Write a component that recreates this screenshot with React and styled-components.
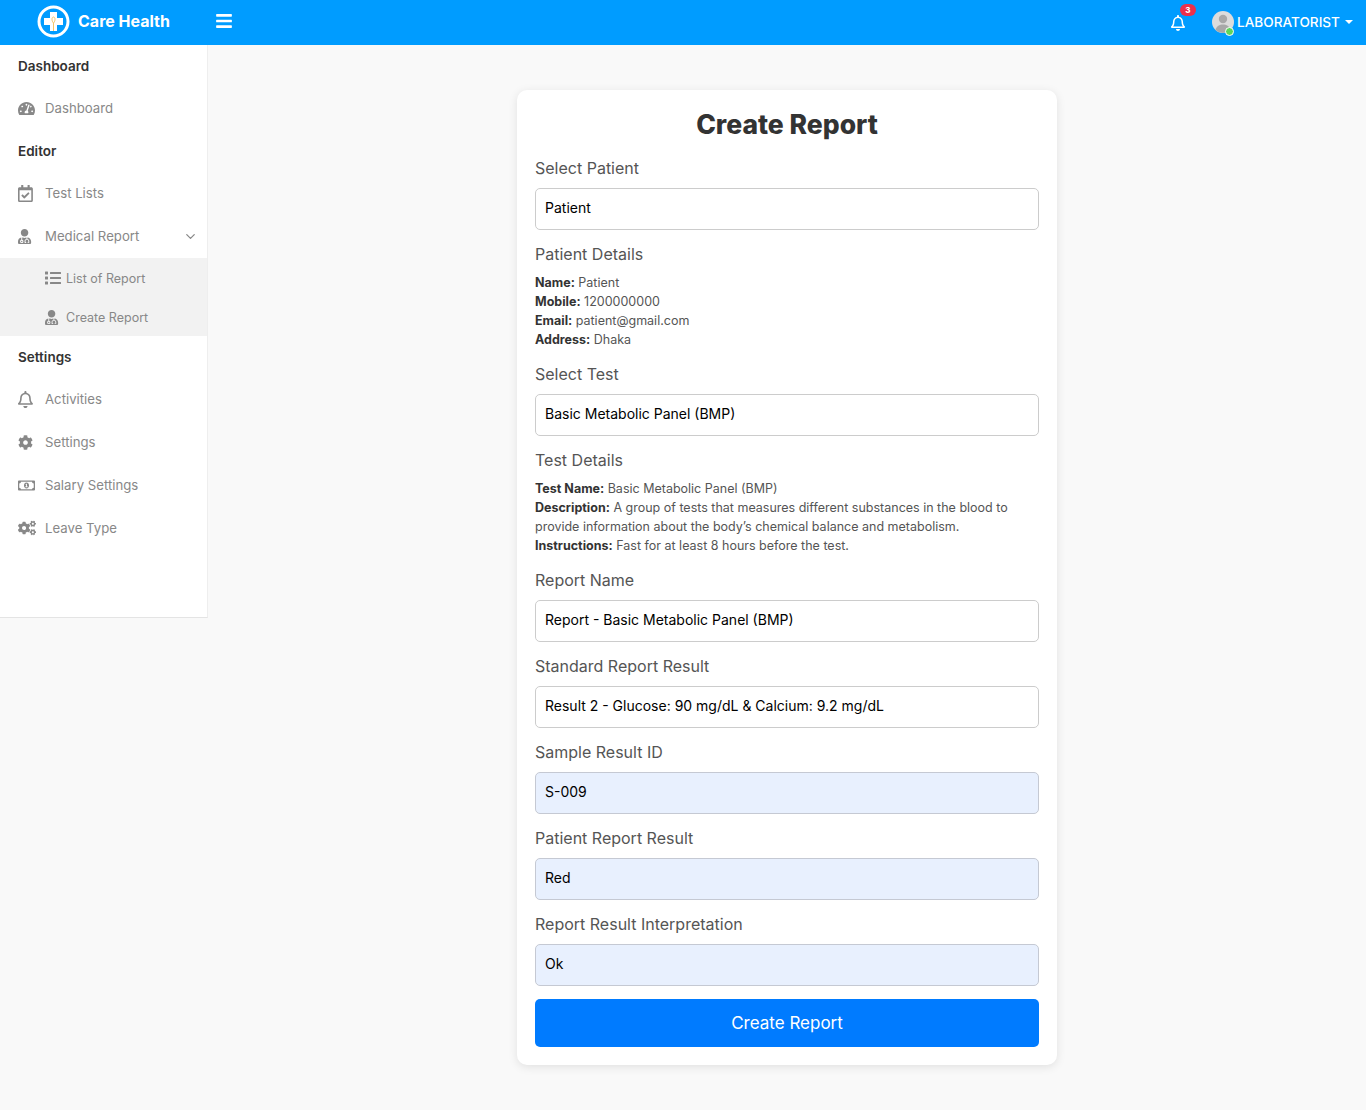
import styled, { createGlobalStyle } from 'styled-components';
import {
  FaBars,
  FaCog,
  FaCogs,
  FaList,
  FaRegBell,
  FaRegCalendarCheck,
  FaRegMoneyBillAlt,
  FaTachometerAlt,
  FaUserMd,
} from 'react-icons/fa';
import { FiChevronDown } from 'react-icons/fi';

const FONT = '"Inter", "Roboto", "Liberation Sans", sans-serif';

const GlobalStyle = createGlobalStyle`
  * {
    box-sizing: border-box;
  }
  body {
    margin: 0;
    background: #f9f9f9;
    font-family: ${FONT};
  }
`;

const Logo = () => (
  <svg width="33" height="33" viewBox="0 0 33 33">
    <circle cx="16.5" cy="16.5" r="14.5" fill="none" stroke="#fff" strokeWidth="3" />
    <path d="M13 7h7v6h6v7h-6v6h-7v-6H7v-7h6z" fill="#fff" />
    <path d="M16.5 12c-2 0-2 4 0 6v8M16.5 12c2 0 2 4 0 6" fill="none" stroke="#f5c469" strokeWidth="1" />
  </svg>
);

const Avatar = () => (
  <svg width="22" height="22" viewBox="0 0 22 22">
    <circle cx="11" cy="11" r="11" fill="#dcdcdc" />
    <circle cx="11" cy="8" r="4.2" fill="#a8a8a8" />
    <path d="M3.5 19c1-4 4-5.5 7.500-5.500s6.500 1.500 7.500 5.500a11 11 0 0 1-15 0z" fill="#a8a8a8" />
  </svg>
);

const sections = [
  { title: 'Dashboard', items: [{ label: 'Dashboard', Icon: FaTachometerAlt, size: 17 }] },
  {
    title: 'Editor',
    items: [
      { label: 'Test Lists', Icon: FaRegCalendarCheck, size: 17 },
      {
        label: 'Medical Report',
        Icon: FaUserMd,
        size: 15,
        children: [
          { label: 'List of Report', Icon: FaList, size: 16 },
          { label: 'Create Report', Icon: FaUserMd, size: 15 },
        ],
      },
    ],
  },
  {
    title: 'Settings',
    items: [
      { label: 'Activities', Icon: FaRegBell, size: 17 },
      { label: 'Settings', Icon: FaCog, size: 15 },
      { label: 'Salary Settings', Icon: FaRegMoneyBillAlt, size: 17 },
      { label: 'Leave Type', Icon: FaCogs, size: 18 },
    ],
  },
];

const patient = [
  ['Name:', 'Patient'],
  ['Mobile:', '1200000000'],
  ['Email:', 'patient@gmail.com'],
  ['Address:', 'Dhaka'],
];

const test = [
  ['Test Name:', 'Basic Metabolic Panel (BMP)'],
  [
    'Description:',
    'A group of tests that measures different substances in the blood to provide information about the body’s chemical balance and metabolism.',
  ],
  ['Instructions:', 'Fast for at least 8 hours before the test.'],
];

const Field = ({ label, value, filled }) => (
  <FieldBlock>
    <Label>{label}</Label>
    <Input type="text" readOnly value={value} $filled={filled} />
  </FieldBlock>
);

const Details = ({ title, rows }) => (
  <DetailBlock>
    <DetailLabel>{title}</DetailLabel>
    <DetailText>
      {rows.map(([name, text]) => (
        <div key={name}>
          <strong>{name}</strong> {text}
        </div>
      ))}
    </DetailText>
  </DetailBlock>
);

export default function App() {
  return (
    <>
      <GlobalStyle />
      <Header>
        <Brand>
          <Logo />
          <BrandName>Care Health</BrandName>
        </Brand>
        <MenuBtn>
          <FaBars size={18} />
        </MenuBtn>
        <HeaderRight>
          <Bell>
            <FaRegBell size={16} />
            <Badge>3</Badge>
          </Bell>
          <User>
            <AvatarWrap>
              <Avatar />
              <Online />
            </AvatarWrap>
            <UserName>LABORATORIST</UserName>
            <Caret />
          </User>
        </HeaderRight>
      </Header>
      <Body>
        <Sidebar>
          {sections.map(section => (
            <div key={section.title}>
              <SectionTitle>{section.title}</SectionTitle>
              {section.items.map(({ label, Icon, size, children }) => (
                <div key={label}>
                  <NavItem>
                    <IconSlot>
                      <Icon size={size} preserveAspectRatio="xMinYMid" />
                    </IconSlot>
                    {label}
                    {children && (
                      <Chevron>
                        <FiChevronDown size={15} />
                      </Chevron>
                    )}
                  </NavItem>
                  {children && (
                    <SubMenu>
                      {children.map(child => (
                        <SubItem key={child.label}>
                          <SubIcon>
                            <child.Icon size={child.size} preserveAspectRatio="xMinYMid" />
                          </SubIcon>
                          {child.label}
                        </SubItem>
                      ))}
                    </SubMenu>
                  )}
                </div>
              ))}
            </div>
          ))}
        </Sidebar>
        <Main>
          <Card>
            <Title>Create Report</Title>
            <Field label="Select Patient" value="Patient" />
            <Details title="Patient Details" rows={patient} />
            <Field label="Select Test" value="Basic Metabolic Panel (BMP)" />
            <Details title="Test Details" rows={test} />
            <Field label="Report Name" value="Report - Basic Metabolic Panel (BMP)" />
            <Field label="Standard Report Result" value="Result 2 - Glucose: 90 mg/dL & Calcium: 9.2 mg/dL" />
            <Field label="Sample Result ID" value="S-009" filled />
            <Field label="Patient Report Result" value="Red" filled />
            <Field label="Report Result Interpretation" value="Ok" filled />
            <SubmitBtn type="button">Create Report</SubmitBtn>
          </Card>
        </Main>
      </Body>
    </>
  );
}

const Header = styled.header`
  display: flex;
  align-items: center;
  height: 45px;
  padding-bottom: 3px;
  background: #009cff;
  color: #fff;
`;
const Brand = styled.div`
  display: flex;
  align-items: center;
  gap: 8px;
  width: 215px;
  padding-left: 37px;
`;
const BrandName = styled.span`
  font-size: 16px;
  font-weight: 700;
`;
const MenuBtn = styled.div`
  display: flex;
`;
const HeaderRight = styled.div`
  display: flex;
  align-items: center;
  margin-left: auto;
  padding: 1px 13px 0 0;
`;
const Bell = styled.div`
  position: relative;
  display: flex;
  margin: 2px 26px 0 0;
`;
const Badge = styled.span`
  position: absolute;
  top: -11px;
  left: 10px;
  width: 16px;
  height: 12px;
  border-radius: 6px;
  background: #ec2f4b;
  font-size: 8px;
  font-weight: 800;
  line-height: 12px;
  text-align: center;
`;
const User = styled.div`
  display: flex;
  align-items: center;
`;
const AvatarWrap = styled.div`
  position: relative;
  display: flex;
  margin-right: 3px;
`;
const Online = styled.span`
  position: absolute;
  right: 0;
  bottom: -3px;
  width: 9px;
  height: 9px;
  border: 1px solid #fff;
  border-radius: 50%;
  background: #5cd65c;
`;
const UserName = styled.span`
  font-size: 13.6px;
  font-weight: 500;
`;
const Caret = styled.span`
  width: 0;
  height: 0;
  margin-left: 5px;
  border-top: 4px solid #fff;
  border-left: 4px solid transparent;
  border-right: 4px solid transparent;
`;
const Body = styled.div`
  display: flex;
  align-items: flex-start;
`;
const Sidebar = styled.aside`
  flex: none;
  width: 208px;
  height: 573px;
  background: #fff;
  border-right: 1px solid #eee;
  border-bottom: 1px solid #e4e4e4;
`;
const SectionTitle = styled.div`
  display: flex;
  align-items: center;
  height: 42px;
  padding-left: 18px;
  color: #333;
  font-size: 13.5px;
  font-weight: 600;
`;
const NavItem = styled.div`
  display: flex;
  align-items: center;
  height: 43px;
  padding: 0 9px 1px 18px;
  color: #888;
  font-size: 13.2px;
`;
const IconSlot = styled.span`
  display: flex;
  width: 27px;
`;
const Chevron = styled.span`
  display: flex;
  margin-left: auto;
`;
const SubMenu = styled.div`
  background: #f2f2f2;
`;
const SubItem = styled.div`
  display: flex;
  align-items: center;
  height: 39px;
  padding: 1px 0 0 45px;
  color: #888;
  font-size: 12.5px;
`;
const SubIcon = styled.span`
  display: flex;
  width: 21px;
`;
const Main = styled.main`
  flex: 1;
  display: flex;
  justify-content: center;
  padding: 45px 0;
`;
const Card = styled.section`
  width: 540px;
  padding: 19px 18px 18px;
  border-radius: 10px;
  background: #fff;
  box-shadow: 0 2px 10px rgba(0, 0, 0, 0.1);
`;
const Title = styled.h1`
  margin: 0 0 19px;
  color: #333;
  font-size: 26.5px;
  font-weight: 800;
  line-height: 30px;
  text-align: center;
`;
const FieldBlock = styled.div`
  margin-bottom: 14px;
`;
const Label = styled.div`
  margin-bottom: 10px;
  color: #555;
  font-size: 16px;
  line-height: 20px;
`;
const DetailLabel = styled(Label)`
  margin-bottom: 9px;
`;
const Input = styled.input`
  display: block;
  width: 100%;
  height: 42px;
  padding: 0 9px 3px;
  border: 1px solid ${({ $filled }) => ($filled ? '#c5c9d3' : '#ccc')};
  border-radius: 5px;
  outline: none;
  background: ${({ $filled }) => ($filled ? '#e8f0fe' : '#fff')};
  color: #000;
  font-family: ${FONT};
  font-size: 14px;
`;
const DetailBlock = styled.div`
  margin-bottom: 15px;
`;
const DetailText = styled.div`
  color: #555;
  font-size: 12.5px;
  line-height: 19px;
  strong {
    color: #333;
    font-weight: 700;
  }
`;
const SubmitBtn = styled.button`
  display: block;
  width: 100%;
  height: 48px;
  margin-top: -1px;
  padding-bottom: 2px;
  border: 0;
  border-radius: 5px;
  background: #007bff;
  color: #fff;
  font-family: ${FONT};
  font-size: 17px;
`;
